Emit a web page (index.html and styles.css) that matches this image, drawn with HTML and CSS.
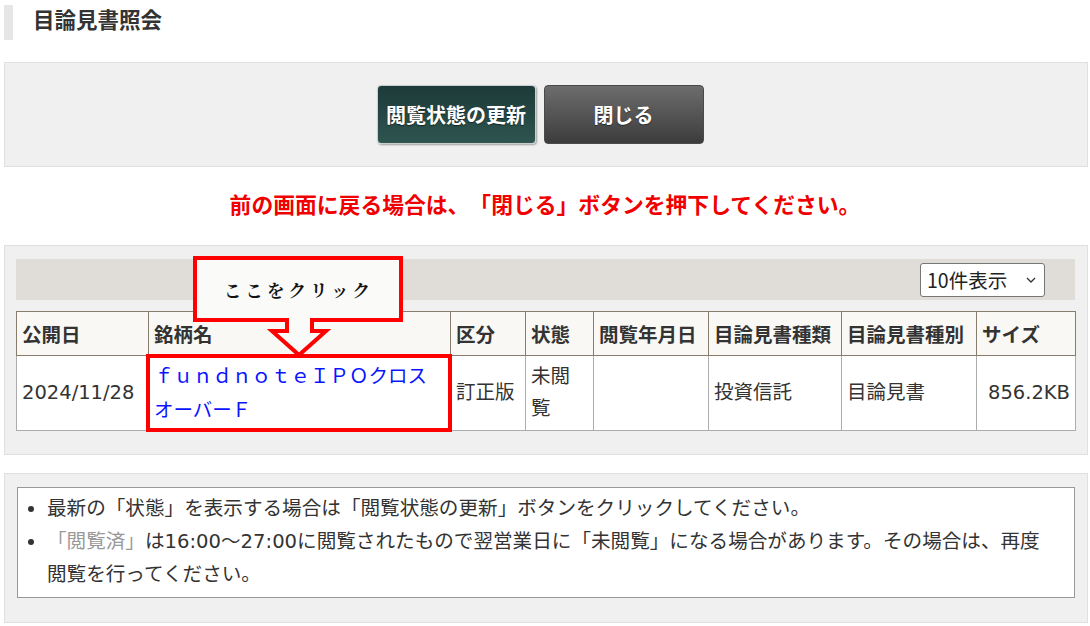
FILE: index.html
```html
<!DOCTYPE html>
<html lang="ja">
<head>
<meta charset="utf-8">
<title>目論見書照会</title>
<link rel="stylesheet" href="styles.css">
</head>
<body>
<h1 class="page-title">目論見書照会</h1>

<div class="panel panel-actions">
  <button class="btn btn-update">閲覧状態の更新</button>
  <button class="btn btn-close">閉じる</button>
</div>

<p class="notice">前の画面に戻る場合は、「閉じる」ボタンを押下してください。</p>

<div class="panel panel-list">
  <div class="toolbar">
    <div class="select">
      <span>10件表示</span>
      <svg class="chev" width="10" height="6" viewBox="0 0 10 6"><path d="M1 1l4 4 4-4" fill="none" stroke="#333" stroke-width="1.3"/></svg>
    </div>
  </div>
  <table class="grid">
    <colgroup>
      <col style="width:132px"><col style="width:302px"><col style="width:75px"><col style="width:68px">
      <col style="width:115px"><col style="width:133px"><col style="width:135px"><col style="width:99px">
    </colgroup>
    <thead>
      <tr>
        <th>公開日</th><th>銘柄名</th><th>区分</th><th>状態</th><th>閲覧年月日</th><th>目論見書種類</th><th>目論見書種別</th><th>サイズ</th>
      </tr>
    </thead>
    <tbody>
      <tr>
        <td>2024/11/28</td>
        <td><a class="fund-link" href="#">ｆｕｎｄｎｏｔｅＩＰＯクロスオーバーＦ</a></td>
        <td>訂正版</td>
        <td>未閲覧</td>
        <td></td>
        <td>投資信託</td>
        <td>目論見書</td>
        <td class="num">856.2KB</td>
      </tr>
    </tbody>
  </table>

  <div class="callout">
    <svg class="callout-shape" width="212" height="104" viewBox="0 0 212 104">
      <polygon points="2,2 208,2 208,64 119,64 119,75 133,75 106,99 79,75 94,75 94,64 2,64" fill="#fafaf8" stroke="#ff0000" stroke-width="4"/>
    </svg>
    <span class="callout-text">ここをクリック</span>
  </div>
  <div class="highlight"></div>
</div>

<div class="panel panel-notes">
  <ul class="notes">
    <li>最新の「状態」を表示する場合は「閲覧状態の更新」ボタンをクリックしてください。</li>
    <li><span class="muted">「閲覧済」</span>は16:00～27:00に閲覧されたもので翌営業日に「未閲覧」になる場合があります。その場合は、再度閲覧を行ってください。</li>
  </ul>
</div>
</body>
</html>
```

FILE: styles.css
```css
* { box-sizing: border-box; }

body {
  margin: 0;
  background: #fff;
  color: #333;
  font-family: "DejaVu Sans", "Noto Sans CJK JP", sans-serif;
  font-size: 19.5px;
  text-spacing-trim: space-all;
}

.page-title {
  margin: 5px 0 22px 4px;
  height: 35px;
  border-left: 9px solid #e6e6e6;
  padding-left: 20px;
  font-family: "Noto Sans CJK JP", sans-serif;
  font-size: 21.5px;
  font-weight: bold;
  line-height: 28px;
  color: #333;
}

.panel {
  margin: 0 2px 0 4px;
  background: #f0f0f0;
  border: 1px solid #e0e0e0;
}

.panel-actions {
  display: flex;
  justify-content: center;
  gap: 8px;
  padding: 22px 12px 22px 0;
}

.btn {
  width: 159px;
  height: 59px;
  border-radius: 4px;
  color: #fff;
  font-family: "Noto Sans CJK JP", sans-serif;
  font-size: 20px;
  font-weight: bold;
  cursor: pointer;
  text-shadow: 0 1px 1px rgba(0,0,0,.5);
}

.btn-update {
  background: linear-gradient(#1c3a39, #2f5550);
  border: 1px solid #c8cfcd;
  box-shadow: 1px 1px 2px rgba(0,0,0,.35);
}

.btn-close {
  width: 160px;
  background: linear-gradient(#6d6d6d, #3c3c3c);
  border: 1px solid #4a4a4a;
}

.notice {
  margin: 0;
  padding: 22px 0 26px 0;
  text-align: center;
  color: #f00000;
  font-family: "Noto Sans CJK JP", sans-serif;
  font-size: 21.8px;
  font-weight: bold;
  line-height: 30px;
}

.panel-list {
  position: relative;
  padding: 13px 12px 23px 11px;
}

.toolbar {
  height: 41px;
  background: #e0ddd8;
  display: flex;
  justify-content: flex-end;
  align-items: center;
  padding-right: 30px;
  margin-bottom: 11px;
}

.select {
  width: 125px;
  height: 34px;
  background: #fff;
  border: 1px solid #767676;
  border-radius: 3px;
  display: flex;
  align-items: center;
  justify-content: space-between;
  padding: 0 8px 0 6px;
  font-family: "Noto Sans CJK JP", sans-serif;
  font-size: 19.5px;
  color: #222;
}

.grid {
  width: 1059px;
  border-collapse: collapse;
  table-layout: fixed;
}

.grid th {
  height: 44px;
  background: #f9f8f5;
  border: 1px solid #877d6c;
  text-align: left;
  padding: 0 5px;
  font-family: "Noto Sans CJK JP", sans-serif;
  font-weight: bold;
  white-space: nowrap;
}

.grid td {
  height: 75px;
  background: #fff;
  border: 1px solid #acacac;
  padding: 0 5px;
  line-height: 32px;
  vertical-align: middle;
}

.grid td.num { text-align: right; }

.fund-link {
  color: #0a14ff;
  text-decoration: none;
  font-family: "Noto Sans CJK JP", sans-serif;
}

.callout {
  position: absolute;
  left: 188px;
  top: 10px;
  width: 212px;
  height: 104px;
}

.callout-shape {
  display: block;
  overflow: visible;
}

.callout-text {
  position: absolute;
  left: 0;
  top: 19px;
  width: 212px;
  text-align: center;
  font-family: "Noto Serif CJK JP", "Noto Sans CJK JP", serif;
  font-size: 17.5px;
  font-weight: bold;
  letter-spacing: 4px;
  line-height: 30px;
  color: #111;
}

.highlight {
  position: absolute;
  left: 141px;
  top: 108px;
  width: 306px;
  height: 78px;
  border: 4px solid #ff0000;
}

.panel-notes {
  margin-top: 18px;
  padding: 13px 12px 24px 12px;
}

.notes {
  margin: 0;
  background: #fff;
  border: 1px solid #999;
  padding: 4px 22px 6px 29px;
  list-style: disc;
  line-height: 33px;
  font-size: 19.6px;
}

.muted { color: #999; }
```
